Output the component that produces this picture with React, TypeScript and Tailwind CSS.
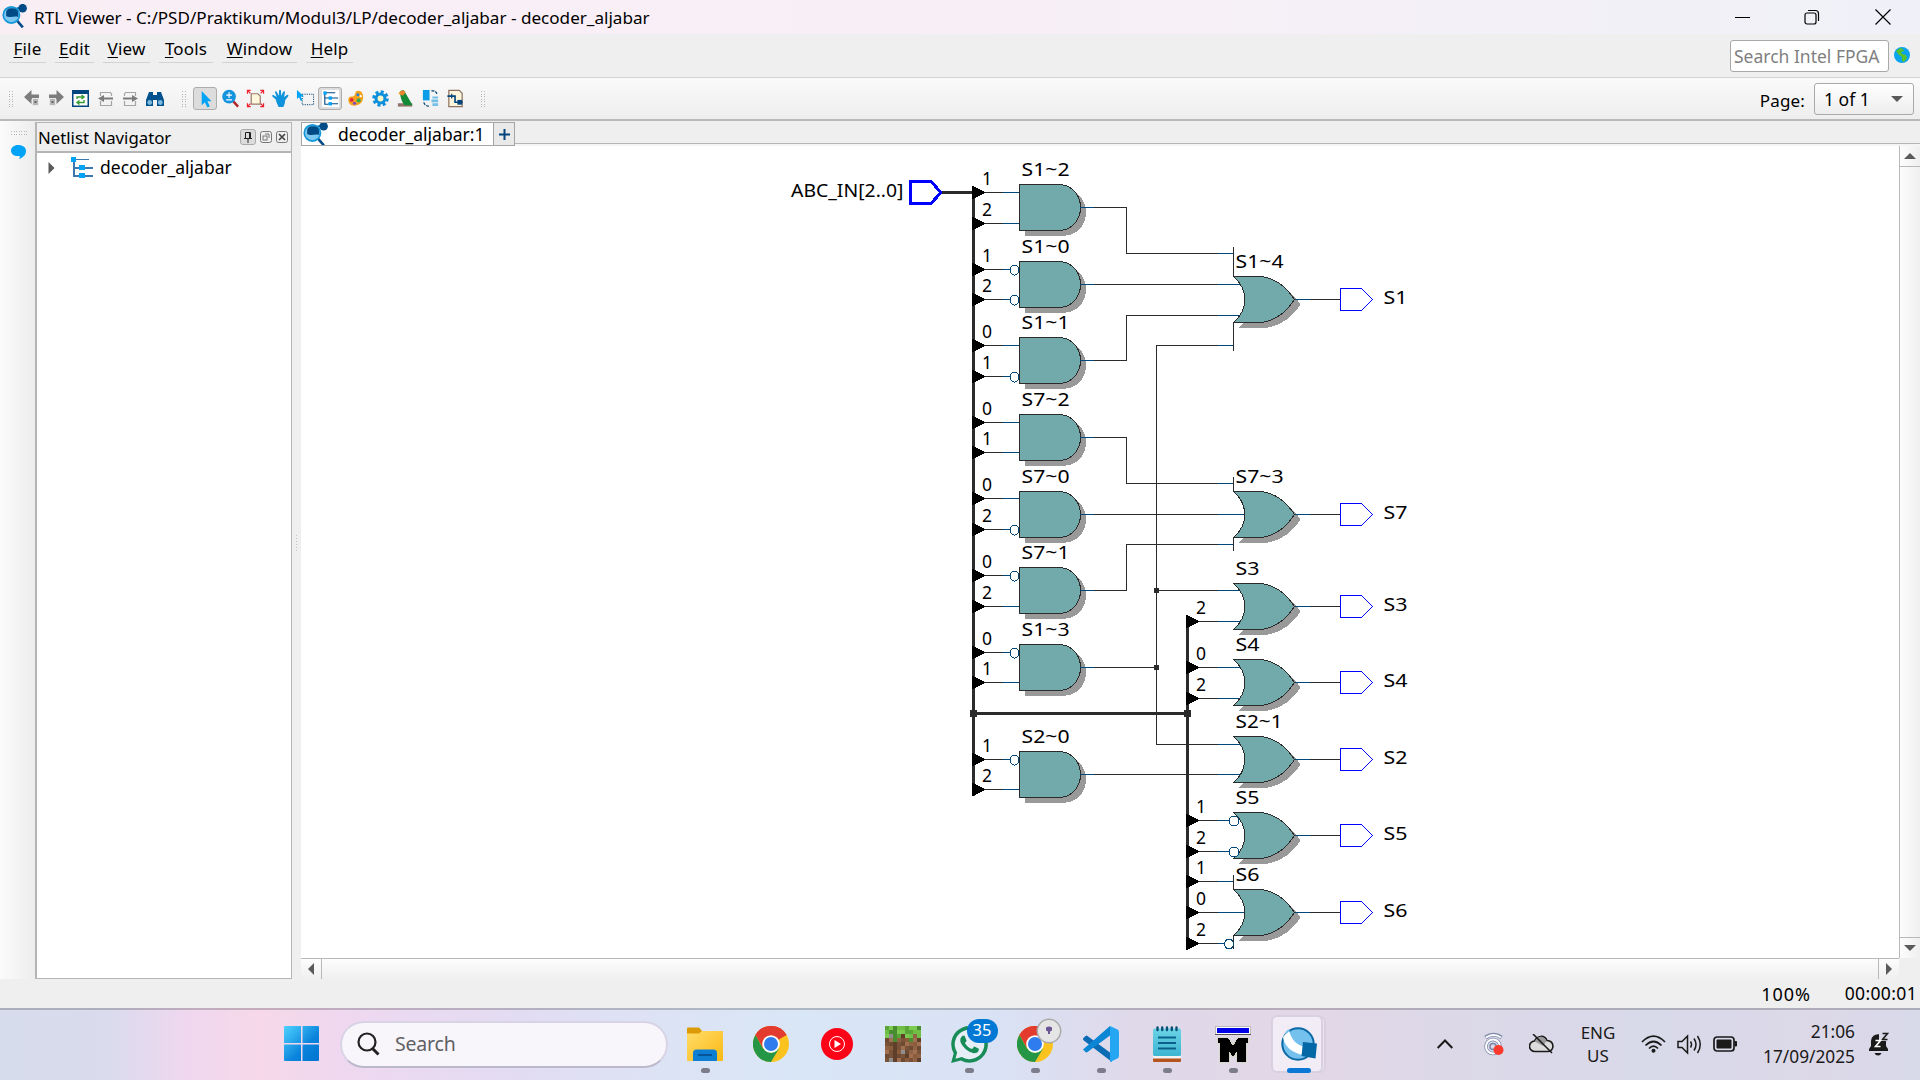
import React from "react";

const NAVY = "#004a86";
const SKY = "#00a3f5";

function ViewerLogo({ size }: { size: number }) {
  return (
    <svg width={size} height={size} viewBox="0 0 24 24" className="shrink-0">
      <path d="M14 4.500 18 3" stroke="#0077b8" strokeWidth="2" />
      <circle cx="19.800" cy="4" r="4.100" fill={NAVY} />
      <path d="M14 15.500 20 22.500" stroke={NAVY} strokeWidth="2.400" />
      <circle cx="9" cy="10.500" r="7.800" fill="#7cc8f0" stroke="#1296d8" strokeWidth="1.600" />
      <path d="M4 11.500V8a4 4 0 0 1 4-4h3a5 5 0 0 1 4.500 5v3.500C12 11 8 14 4 11.500Z" fill={NAVY} />
    </svg>
  );
}

function HierarchyIcon({ size }: { size: number }) {
  return (
    <svg width={size} height={size} viewBox="0 0 22 22" shapeRendering="crispEdges">
      <path d="M3 5v14h6M3 11h19M3 2.500h15M9 19h13" stroke="#3b78ad" strokeWidth="1.200" fill="none" />
      <rect x="0" y="0" width="5" height="5" fill={SKY} />
      <rect x="8" y="8" width="6" height="5" fill={SKY} />
      <rect x="8" y="16" width="6" height="5" fill={SKY} />
    </svg>
  );
}

function Grip() {
  return (
    <svg width="5" height="16" viewBox="0 0 5 16" shapeRendering="crispEdges">
      <path d="M.5 0v16M3.500 0v16" stroke="#b5b5b5" strokeDasharray="1 1.500" />
    </svg>
  );
}

function ArrowIcon({ flip }: { flip?: boolean }) {
  return (
    <svg width="16" height="17" viewBox="0 0 16 17" className={flip ? "-scale-x-100" : ""}>
      <path d="M0 7 7.500 0v4.500H15V9H7.500v5Z" fill="#7d7d7d" />
      <rect x="8.500" y="8.500" width="6" height="7" fill="#b5b5b5" stroke="#e8e8e8" />
      <rect x="10.500" y="11" width="2" height="2" fill="#666" />
    </svg>
  );
}

function PageArrow({ flip }: { flip?: boolean }) {
  return (
    <svg width="16" height="16" viewBox="0 0 16 16" fill="none" className={flip ? "-scale-x-100" : ""}>
      <path d="M2.500 5V1.500h10l1 1.500V5M2.500 10v4.500h11V10" stroke="#a5a5a5" strokeWidth="1.200" />
      <path d="M5 7.500h10" stroke="#7b7b7b" strokeWidth="2" />
      <path d="M0 7.500 6 4v7Z" fill="#7b7b7b" />
    </svg>
  );
}

const toolIcons: React.ReactNode[] = [
  <path d="M6 2v15l3.300-3 2.700 5.500 2.500-1.300L12 12.800h4.300Z" fill={SKY} />,
  <g>
    <path d="M12 12 18 18.500" stroke="#b3262a" strokeWidth="2.600" />
    <circle cx="8.500" cy="8" r="7.200" fill="#1593dd" />
    <path d="M5.500 6.500h6M8.500 3.500v6M5.500 11.500h6" stroke="#fff" strokeWidth="1.200" />
  </g>,
  <g>
    <path d="M5.500 5h7l2.500 2.500V16H5.500Z" fill="#fff8dc" stroke="#9a7b6b" strokeWidth="1.300" />
    <path d="M1.500 5V1.500H5M1.500 1.500l3 3M15 1.500h3.500V5M18.500 1.500l-3 3M1.500 15v3.500H5M1.500 18.500l3-3M15 18.500h3.500V15M18.500 18.500l-3-3" stroke="#f0202c" fill="none" strokeWidth="1.200" />
  </g>,
  <path d="M5 11 1.500 8c-1-1 .3-2.200 1.400-1.400L6 8.500 4.300 3.600c-.3-1.300 1.300-1.800 1.800-.5L8.200 7 8.500 1.800c.1-1.400 1.900-1.400 2 0l.3 5.200L12.900 3c.6-1.200 2.200-.5 1.800.8L13.800 8.500l3-2.200c1.200-.7 2.200.5 1.200 1.500L15 11.500l-.6 4L13 19H8l-2-4.500Z" fill="#0f93dc" />,
  <g>
    <rect x="6.500" y="5.500" width="12" height="11" fill="none" stroke="#003f70" strokeDasharray="1.200 1.200" />
    <path d="M1 1v9.500l2.200-1.800L5 12.500l1.700-.8L5 8h3.500Z" fill={SKY} />
  </g>,
  <g>
    <rect x="1" y="1" width="18" height="18" fill="#fff" />
    <path d="M4 4v12h4M4 9.500h14M4 4h11M8 15.500h10" stroke={NAVY} fill="none" strokeWidth="1.200" />
    <rect x="2.500" y="2.500" width="3.500" height="3.500" fill={SKY} />
    <rect x="8" y="7.800" width="3.500" height="3.500" fill={SKY} />
    <rect x="8" y="13.800" width="3.500" height="3.500" fill={SKY} />
  </g>,
  <g>
    <path d="M10 3c5-3 8.500 1 8 6.500-.5 5-4 8-9.500 8C4 17.500 2 14 2.500 10.500 3 8 5 8 7 8s3-3 3-5Z" fill="#f6a21d" />
    <circle cx="6" cy="11.500" r="2" fill="#e22740" /><circle cx="9" cy="15" r="1.700" fill="#7a48c5" />
    <circle cx="13.300" cy="12" r="2.200" fill="#35a852" /><circle cx="12.500" cy="6" r="1.600" fill="#1f83dd" />
    <circle cx="15.500" cy="7.500" r="1.200" fill="#fff" />
  </g>,
  <g>
    <circle cx="10" cy="10" r="7.200" fill="none" stroke="#108fdb" strokeWidth="3" strokeDasharray="3.200 2.450" />
    <circle cx="10" cy="10" r="4.700" fill="#fff6c8" stroke="#108fdb" strokeWidth="3.200" />
  </g>,
  <g>
    <path d="M2 15h15v3.500H2Z" fill="#8d7468" />
    <path d="M4 4C4 1 9 0 9.500 3.500L17.500 17H9C5 12 5 8 4 4Z" fill="#138a36" />
    <path d="M3 5c0-4 6-5 7-1L7 7Z" fill="#e8842b" /><path d="m2.500 4.500 3 .5-2.500 1Z" fill="#f5c84c" />
  </g>,
  <g>
    <rect x="2" y="1" width="7" height="11" fill="#0b9ee8" />
    <path d="M12 8h6v2h-6Zm-1 3h7v3h-7Zm1 4h6v3h-6Z" fill="#73bfe8" />
    <path d="M11 2c3-.5 5 .5 6 4M3 14c.5 2.500 3 4.500 6 4" fill="none" stroke="#003f70" strokeWidth="1.300" strokeDasharray="3 1.200" />
  </g>,
  <g>
    <path d="M3 1.500h11l3 3v14H3Z" fill="#fff6dc" stroke="#8c7160" strokeWidth="1.300" />
    <path d="M1.500 7.500h8v6.500h8" stroke="#00457d" strokeWidth="1.700" fill="none" />
    <rect x="12" y="11.500" width="5" height="5" fill="#00457d" />
    <path d="M6 5v5" stroke="#00457d" strokeWidth="1.300" />
  </g>,
];

function ToolButton({ index }: { index: number }) {
  const active = index === 0 || index === 5;
  return (
    <div className={`flex h-[23px] w-6 items-center justify-center ${active ? "rounded-[3px] border border-[#adadad] bg-[#dcdcdc]" : ""}`}>
      <svg width="19" height="19" viewBox="0 0 20 20" className="shrink-0">{toolIcons[index]}</svg>
    </div>
  );
}

/* ---------- schematic ---------- */

type AndGate = { name: string; y: number; pins: [string, boolean, number][] };
const andGates: AndGate[] = [
  { name: "S1~2", y: 184.5, pins: [["1", false, 192.5], ["2", false, 223.5]] },
  { name: "S1~0", y: 261.5, pins: [["1", true, 269.5], ["2", true, 299.5]] },
  { name: "S1~1", y: 337.5, pins: [["0", false, 345.5], ["1", true, 376.5]] },
  { name: "S7~2", y: 414.5, pins: [["0", false, 422.5], ["1", false, 452.5]] },
  { name: "S7~0", y: 491.5, pins: [["0", false, 498.5], ["2", true, 529.5]] },
  { name: "S7~1", y: 567.5, pins: [["0", true, 575.5], ["2", false, 606.5]] },
  { name: "S1~3", y: 644.5, pins: [["0", true, 652.5], ["1", false, 682.5]] },
  { name: "S2~0", y: 751.5, pins: [["1", true, 759.5], ["2", false, 789.5]] },
];

type OrGate = { name: string; out: string; y: number; w: number };
const orGates: OrGate[] = [
  { name: "S1~4", out: "S1", y: 276.5, w: 47 },
  { name: "S7~3", out: "S7", y: 491.5, w: 47 },
  { name: "S3", out: "S3", y: 583.5, w: 23 },
  { name: "S4", out: "S4", y: 659.5, w: 23 },
  { name: "S2~1", out: "S2", y: 736.5, w: 46 },
  { name: "S5", out: "S5", y: 812.5, w: 23 },
  { name: "S6", out: "S6", y: 889.5, w: 23 },
];

/* [x where the black wire starts, x where it ends at the gate, y] */
const orInputs: [number, number, number][] = [
  [1126, 1233, 253.5], [1094, 1240, 284.5], [1126, 1240, 315.5], [1156, 1233, 345.5],
  [1126, 1233, 483.5], [1094, 1244, 514.5], [1126, 1233, 544.5],
  [1156, 1240, 590.5], [1187, 1240, 621.5], [1187, 1240, 667.5], [1187, 1240, 698.5],
  [1156, 1240, 744.5], [1094, 1240, 774.5], [1187, 1229, 820.5], [1187, 1229, 851.5],
  [1187, 1233, 881.5], [1187, 1244, 912.5], [1187, 1225, 943.5],
];

const rightTaps: [string, number][] = [
  ["2", 621.5], ["0", 667.5], ["2", 698.5], ["1", 820.5], ["2", 851.5], ["1", 881.5], ["0", 912.5], ["2", 943.5],
];

const INK = "#2b2b2b";
const PIN = "#00487a";

function Tap({ x, y, label }: { x: number; y: number; label: string }) {
  return (
    <g>
      <path d={`M${x} ${y - 7}L${x + 13.500} ${y}L${x} ${y + 7}Z`} fill="#000" />
      <text x={x + 15} y={y - 7.500} fontSize="17.500" textAnchor="middle" fill="#000">{label}</text>
    </g>
  );
}

function Label({ x, y, w, children }: { x: number; y: number; w: number; children: string }) {
  return (
    <text x={x} y={y} fontSize="18.500" textLength={w} lengthAdjust="spacingAndGlyphs" fill="#000">{children}</text>
  );
}

const andPath = (x: number, y: number) =>
  `M${x} ${y}h41c12 1 20 11 20 23s-8 22-20 23h-41Z`;
const orPath = (x: number, y: number) =>
  `M${x} ${y}h28c15 2 26 12 33 23c-7 11-18 21-33 23h-28c15-13 15-33 0-46Z`;

function Schematic() {
  return (
    <svg
      width="1598" height="812" viewBox="301 146 1598 812" fill="none"
      shapeRendering="crispEdges" className="block font-['Noto_Sans',sans-serif]"
    >
      <Label x={791} y={196.500} w={112.500}>ABC_IN[2..0]</Label>
      <path d="M910.500 181.500h20.500l10 11-10 11h-20.500Z" stroke="#00f" strokeWidth="3" fill="#fff" />
      <path d="M942 192.500h31M973.500 187v609M1187.500 616v333M973.500 713.500h214" stroke={INK} strokeWidth="3" />

      <path
        d="M1094 207.500h32.500v46M1126.500 315.500v45H1094M1094 437.500h32.500v46M1126.500 544.500v46H1094M1156.500 345.500v399M1094 667.500h62.500"
        stroke={INK}
      />
      <path d="M1233.500 247v30M1233.500 322v29M1233.500 477v15M1233.500 538v13M1233.500 875v15M1233.500 935v14" stroke={INK} />
      {orInputs.map(([x1, x2, y]) => (
        <g key={`${x1}-${y}`}>
          <path d={`M${x1} ${y}H1218`} stroke={INK} />
          <path d={`M1218 ${y}H${x2}`} stroke={PIN} />
        </g>
      ))}

      {andGates.map((g) => (
        <g key={g.name}>
          <path d={andPath(1025, g.y + 5)} fill="#999" />
          <path d={andPath(1019.500, g.y)} fill="#72aaab" stroke={INK} />
          <path d={`M1080 ${g.y + 23}h14`} stroke={PIN} />
          <Label x={1021.500} y={g.y - 9} w={48}>{g.name}</Label>
          {g.pins.map(([label, inverted, y]) => (
            <g key={y}>
              <path d={`M975 ${y}h28`} stroke={INK} />
              <path d={`M1003 ${y}h${inverted ? 7 : 16}`} stroke={PIN} />
              {inverted && <ellipse cx="1014.500" cy={y + 0.5} rx="4.500" ry="5" stroke={PIN} fill="#fff" />}
              <Tap x={972} y={y} label={label} />
            </g>
          ))}
        </g>
      ))}

      {orGates.map((g) => (
        <g key={g.name}>
          <path d={orPath(1239.500, g.y + 5)} fill="#999" />
          <path d={orPath(1233.500, g.y)} fill="#72aaab" stroke={INK} />
          <path d={`M1295 ${g.y + 23}h15`} stroke={PIN} />
          <path d={`M1310 ${g.y + 23}h30`} stroke={INK} />
          <path d={`M1340.500 ${g.y + 12}h21l11 11-11 11h-21Z`} stroke="#00f" fill="#fff" />
          <Label x={1235.500} y={g.y - 9} w={g.w + 1}>{g.name}</Label>
          <Label x={1383.500} y={g.y + 27} w={24}>{g.out}</Label>
        </g>
      ))}

      {rightTaps.map(([label, y]) => <Tap key={y} x={1186} y={y} label={label} />)}
      <ellipse cx="1234" cy="821" rx="5" ry="5" stroke={PIN} fill="#fff" />
      <ellipse cx="1234" cy="852" rx="5" ry="5" stroke={PIN} fill="#fff" />
      <ellipse cx="1229" cy="944" rx="4.500" ry="5" stroke={PIN} fill="#fff" />

      <g fill={INK}>
        <rect x="1154" y="588" width="5" height="5" />
        <rect x="1154" y="665" width="5" height="5" />
        <rect x="970" y="710" width="7" height="7" />
        <rect x="1184" y="710" width="7" height="7" />
      </g>
    </svg>
  );
}

/* ---------- taskbar icons ---------- */

function ChromeIcon() {
  return (
    <svg width="36" height="36" viewBox="0 0 36 36">
      <circle cx="18" cy="18" r="18" fill="#fcc31e" />
      <path d="M18 18 2.400 9A18 18 0 0 1 33.600 9Z" fill="#e33b2e" />
      <path d="M18 9h15.600A18 18 0 0 0 2.400 9L10 22Z" fill="#e33b2e" />
      <path d="M2.400 9A18 18 0 0 0 18 36l8-13.500-8 4.500-8-4.500Z" fill="#249645" />
      <circle cx="18" cy="18" r="8.800" fill="#fff" />
      <circle cx="18" cy="18" r="7" fill="#2f7cee" />
    </svg>
  );
}

const dirt = ["#7a5237", "#8f6343", "#5f3f2a", "#a07050", "#6d4a32", "#8a5c3c"];
const grass = ["#5aa43a", "#6fbf45", "#4a8c30", "#7bcb50"];

function GrassBlock() {
  const depth = [3, 2, 4, 3, 2, 3, 4, 2, 3];
  const cells: React.ReactNode[] = [];
  for (let y = 0; y < 9; y++)
    for (let x = 0; x < 9; x++) {
      const n = (x * 7 + y * 13 + x * y * 5) % 23;
      const stone = (x === 1 && y === 2) || (x === 4 && y === 6) || (x === 1 && y === 8);
      const fill = stone ? "#8f8f8f" : y < depth[x] ? grass[n % 4] : dirt[n % 6];
      cells.push(<rect key={`${x}-${y}`} x={x * 4} y={y * 4} width="4" height="4" fill={fill} />);
    }
  return <svg width="36" height="36" viewBox="0 0 36 36" shapeRendering="crispEdges">{cells}</svg>;
}

const apps: { node: React.ReactNode; dot?: boolean; active?: boolean }[] = [
  {
    dot: true,
    node: (
      <svg width="36" height="34" viewBox="0 0 36 34">
        <defs><linearGradient id="fold" x2="1" y2="1"><stop stopColor="#ffdc6b" /><stop offset="1" stopColor="#fbb913" /></linearGradient></defs>
        <path d="M0 1.500Q0 .5 1 .5h11l3 3.500h20q1 0 1 1V12H0Z" fill="#dc9b06" />
        <path d="M0 6.500h12l3-2.500h20q1 0 1 1v28q0 1-1 1H1q-1 0-1-1Z" fill="url(#fold)" />
        <path d="M6 34V26q0-3.500 3.500-3.500h17q3.500 0 3.500 3.500v8Z" fill="#0d7ed2" />
        <path d="M11 28h14" stroke="#07539a" strokeWidth="2" />
      </svg>
    ),
  },
  { node: <ChromeIcon /> },
  {
    node: (
      <svg width="32" height="32" viewBox="0 0 32 32">
        <circle cx="16" cy="16" r="16" fill="#fb0418" />
        <circle cx="16" cy="16" r="7.500" fill="none" stroke="#fff" strokeWidth="1" />
        <path d="M13.500 12v8l6.500-4Z" fill="#fff" />
      </svg>
    ),
  },
  { node: <GrassBlock /> },
  {
    dot: true,
    node: (
      <div className="relative">
        <svg width="37" height="37" viewBox="0 0 24 24">
          <path d="M.057 24l1.687-6.163a11.870 11.870 0 0 1-1.587-5.946C.16 5.335 5.495 0 12.050 0a11.820 11.820 0 0 1 8.413 3.488 11.820 11.820 0 0 1 3.480 8.414c-.003 6.557-5.338 11.892-11.893 11.892a11.900 11.900 0 0 1-5.688-1.448L.057 24z" fill="#178c57" />
          <path d="M2.900 21.200 4 17.200a9.600 9.600 0 1 1 3 2.900Z" fill="#e6eff5" />
          <path d="M17.470 14.380c-.3-.15-1.760-.87-2.030-.97-.27-.1-.47-.15-.67.150-.2.300-.77.970-.94 1.160-.17.200-.35.220-.64.080-.3-.15-1.260-.46-2.390-1.480-.88-.79-1.480-1.760-1.650-2.060-.17-.3-.02-.46.130-.6.130-.14.300-.35.450-.52.150-.17.200-.3.300-.5.100-.2.050-.37-.03-.52-.08-.15-.67-1.610-.92-2.210-.24-.58-.49-.5-.67-.51h-.57c-.2 0-.52.070-.79.370-.27.300-1.040 1.020-1.040 2.480s1.070 2.880 1.210 3.070c.15.200 2.100 3.200 5.080 4.490 2.480.98 2.980.8 3.520.75.540-.05 1.760-.72 2-1.410.25-.7.250-1.290.17-1.410-.07-.13-.27-.2-.57-.35z" fill="#178c57" />
        </svg>
        <div className="absolute -top-[7px] left-[16px] flex h-6 w-[31px] items-center justify-center rounded-full bg-[#0078d4] text-[16.500px] leading-none text-white">35</div>
      </div>
    ),
  },
  {
    dot: true,
    node: (
      <div className="relative">
        <ChromeIcon />
        <svg width="26" height="26" viewBox="0 0 26 26" className="absolute -top-[8px] left-[19px]">
          <circle cx="13" cy="13" r="11.700" fill="#e5e5e5" stroke="#aaa" strokeWidth="1.500" />
          <path d="M10 9.500q3-1.800 6 0v3L14 13.500v2.500h-2v-2.500l-2-1Z" fill="#6a5692" />
        </svg>
      </div>
    ),
  },
  {
    dot: true,
    node: (
      <svg width="36" height="36" viewBox="0 0 36 36">
        <path d="M0 12.500 2.500 10q1-.8 2 0L29 28v8L.8 14.500Q-.3 13.500 0 12.500Z" fill="#0b6cb5" />
        <path d="M0 23.500 27 0v9.500L4.500 26q-1 .8-2 0Z" fill="#0a86d4" />
        <path d="M27 0 34.500 3.500Q36 4.200 36 6v24q0 1.800-1.500 2.500L27 36Z" fill="#25a6f2" />
      </svg>
    ),
  },
  {
    dot: true,
    node: (
      <svg width="28" height="36" viewBox="0 0 28 36">
        <defs><linearGradient id="note" x2="0" y2="1"><stop stopColor="#6cd3e6" /><stop offset="1" stopColor="#3db5d2" /></linearGradient></defs>
        <rect y="30" width="28" height="6" rx="1" fill="#b5541c" /><rect y="29" width="28" height="3.500" fill="#f2f2f2" />
        <rect y="2.500" width="28" height="27.500" rx="1.500" fill="url(#note)" />
        <path d="M4.500 1.500v2.500M9.200 1.500v2.500M14 1.500v2.500M18.800 1.500v2.500M23.500 1.500v2.500" stroke="#0b4f74" strokeWidth="2.400" strokeLinecap="round" />
        <path d="M5 11.500h18M5 17h18M5 22.500h18" stroke="#0a6089" strokeWidth="2" />
      </svg>
    ),
  },
  {
    dot: true,
    node: (
      <svg width="36" height="37" viewBox="0 0 36 37" shapeRendering="crispEdges">
        <rect x=".5" y=".5" width="35" height="8" fill="#fff" stroke="#bbb" /><path d="M0 8.500h36" stroke="#555" />
        <rect x="2" y="2" width="32" height="5" fill="#0000e8" />
        <path d="M2.500 11.500h11l4.500 7 4.500-7h11v6h-2v19h-10v-9l-3.500 4-3.500-4v9H4.500v-19h-2Z" fill="#000" stroke="#d7d7cc" strokeWidth="1.500" />
      </svg>
    ),
  },
  {
    active: true,
    node: (
      <svg width="36" height="36" viewBox="0 0 36 36">
        <circle cx="17" cy="18" r="15.700" fill="#74c1ee" stroke="#0a69a5" strokeWidth="2" />
        <path d="M2 11 8 4c2 9 7 16 18 17l-4 8C11 27 3 20 2 11Z" fill="#fff" />
        <path d="m22 16 14 1.500-1.500 15L20.500 30Z" fill="#0568a6" />
        <path d="M8 4 5 7" stroke="#74c1ee" strokeWidth="2" />
      </svg>
    ),
  },
];

function Triangle({ d }: { d: string }) {
  return <svg width="12" height="12" viewBox="0 0 12 12"><path d={d} fill="#5a5a5a" /></svg>;
}

const menu: [string, string][] = [
  ["File", "w-[37px]"], ["Edit", "w-[39px]"], ["View", "w-[47px]"],
  ["Tools", "w-[54px]"], ["Window", "w-[75px]"], ["Help", "w-[47px]"],
];

export default function App() {
  return (
    <div className="flex h-[1080px] w-[1920px] flex-col overflow-hidden bg-[#efefef] font-['Noto_Sans',sans-serif] text-[17px] leading-none whitespace-nowrap text-black">
      <header className="flex h-[34px] shrink-0 items-center bg-linear-to-r from-[#faeef5] via-[#f8eff6] to-[#f0f1f8]">
        <div className="flex h-full w-[34px] items-start pt-[4px] pl-[2px]"><ViewerLogo size={25} /></div>
        <span className="pt-px text-[17.100px]">RTL Viewer - C:/PSD/Praktikum/Modul3/LP/decoder_aljabar - decoder_aljabar</span>
        <div className="ml-auto flex items-center">
          <svg width="15" height="16" className="mr-[54px]"><path d="M0 8.500h15" stroke="#000" /></svg>
          <svg width="16" height="16" viewBox="0 0 16 16" fill="none" stroke="#000" strokeWidth="1.200" className="mr-[55px]">
            <rect x="1" y="4" width="11" height="11" rx="2" /><path d="M4 1.500h7.500a3 3 0 0 1 3 3V12" />
          </svg>
          <svg width="16" height="16" viewBox="0 0 16 16" className="mr-[29px]"><path d="m.5.5 15 15M15.500.5l-15 15" stroke="#000" strokeWidth="1.200" /></svg>
        </div>
      </header>

      <div className="flex h-[44px] shrink-0 items-start border-b border-[#d2d2d2]">
        <nav className="ml-[9px] flex gap-[9px]">
          {menu.map(([m, w]) => (
            <div key={m} className={`flex h-[29px] items-center justify-center border-b border-[#d2d2d2] tracking-[0.010em] ${w}`}>
              <span><span className="underline decoration-1 underline-offset-2">{m[0]}</span>{m.slice(1)}</span>
            </div>
          ))}
        </nav>
        <div className="mt-[6px] ml-auto flex h-8 w-[159px] items-center rounded-[3px] border border-[#a9a9a9] bg-white pt-px pl-[3px] text-[17.500px] text-[#7f7f7f]">Search Intel FPGA</div>
        <svg width="16" height="16" viewBox="0 0 16 16" className="mt-[13px] mr-[10px] ml-[5px]">
          <circle cx="8" cy="8" r="8" fill="#0aa3ef" />
          <path d="M2 4 6 1l3 1 1 2-3 1 1 2 4 1 1 3-3 4-2-1V10L5 8Z" fill="#58c22c" />
        </svg>
      </div>

      <div className="flex h-[43px] shrink-0 items-center border-b-2 border-[#b9b9b9] bg-linear-to-b from-[#fafafa] to-[#eeeeee]">
        <div className="ml-[9px] flex items-center"><Grip /></div>
        <div className="ml-[10px] flex items-center gap-[8px]">
          <ArrowIcon /><ArrowIcon flip />
          <svg width="17" height="17" viewBox="0 0 17 17">
            <rect x=".75" y=".75" width="15.500" height="15.500" fill="#fff" stroke="#00457d" strokeWidth="1.500" /><path d="M0 0h17v4H0Z" fill="#00457d" />
            <path d="M5 9V7h6M12 10v2.500H6M9.500 5 12 7 9.500 9M7.500 10.500 5 12.500l2.500 2" stroke="#3a9d34" fill="none" strokeWidth="1.400" />
          </svg>
          <div className="ml-[1px]"><PageArrow /></div><div><PageArrow flip /></div>
          <svg width="18" height="16" viewBox="0 0 18 16">
            <path d="M3 1h4v3h4V1h4l3 8v6h-7V9H7v6H0V9Z" fill="#00528f" />
            <circle cx="3.700" cy="11.500" r="2.400" fill="#7fb9dc" /><circle cx="14.300" cy="11.500" r="2.400" fill="#7fb9dc" />
          </svg>
        </div>
        <div className="ml-[18px]"><Grip /></div>
        <div className="ml-[6px] flex gap-px">{toolIcons.map((_, i) => <ToolButton key={i} index={i} />)}</div>
        <div className="ml-[14px]"><Grip /></div>
        <span className="ml-auto pt-[4px] tracking-[0.010em]">Page:</span>
        <div className="mr-[6px] ml-[9px] flex h-8 w-[100px] items-center justify-between rounded-[3px] border border-[#a9a9a9] bg-linear-to-b from-white to-[#ededed] pr-[10px] pl-[9px]">
          <span className="pt-[3px] text-[17.500px]">1 of 1</span><Triangle d="M0 3h12L6 9Z" />
        </div>
      </div>

      <main className="flex h-[858px] shrink-0">
        <aside className="flex w-[35px] flex-col items-center bg-linear-to-r from-[#fbfbfb] to-[#ededed] pt-[10px]">
          <svg width="16" height="5" shapeRendering="crispEdges" className="ml-[3px]"><path d="M0 .5h16M0 3.500h16" stroke="#b5b5b5" strokeDasharray="1 1.500" /></svg>
          <svg width="15" height="14" viewBox="0 0 15 14" className="mt-[9px] ml-[1px]"><path d="M7 0c5 0 8 2.500 8 6 0 4-3 6.500-7 8 1-1.500 1-2 .5-3C3 11.500 0 9 0 5.500 0 2.500 3 0 7 0Z" fill={SKY} /></svg>
        </aside>
        <section className="mt-px flex w-[257px] flex-col border border-l-2 border-[#b5b5b5] bg-white">
          <div className="flex h-[30px] shrink-0 items-center border-b-2 border-[#b5b5b5] bg-[#efefef] pl-[1px]">
            <span className="pt-[3px] text-[16.800px]">Netlist Navigator</span>
            <div className="mr-[3px] ml-auto flex items-center gap-[4px]">
              <div className="flex h-[16px] w-[16px] items-center justify-center rounded-[3px] border border-[#aaa] bg-[#dcdcdc]">
                <svg width="8" height="12" viewBox="0 0 8 12" fill="none" stroke="#222"><path d="M1.500 7V1.500h5V7M0 7.500h8M4 8v4M5.500 2v5" /></svg>
              </div>
              <svg width="12" height="12" viewBox="0 0 12 12" fill="none" stroke="#777"><rect x=".5" y=".5" width="11" height="11" rx="2" /><rect x="3" y="5" width="4" height="4" /><path d="M5 3h4v4" /></svg>
              <svg width="12" height="12" viewBox="0 0 12 12" fill="none" stroke="#777"><rect x=".5" y=".5" width="11" height="11" rx="2" /><path d="m3 3 6 6M9 3 3 9" stroke="#444" strokeWidth="1.700" /></svg>
            </div>
          </div>
          <div className="flex h-[30px] items-center pl-[9px]">
            <Triangle d="M2.500 0v12L8.500 6Z" />
            <div className="ml-[13px]"><HierarchyIcon size={22} /></div>
            <span className="ml-[7px] text-[17.500px]">decoder_aljabar</span>
          </div>
        </section>
        <div className="flex w-[9px] items-center justify-center">
          <svg width="3" height="16" shapeRendering="crispEdges" className="-mt-[14px]"><path d="M1.500 0v16" stroke="#c5c5c5" strokeDasharray="1 2" /></svg>
        </div>
        <section className="flex flex-1 flex-col">
          <div className="flex h-[25px] shrink-0 items-start border-b-2 border-[#f4f4f4]">
            <div className="mt-px flex h-[24px] w-[193px] items-center overflow-hidden border border-[#a5a5a5] bg-white pl-[1px]">
              <ViewerLogo size={25} />
              <span className="ml-[10px] pt-[2px] text-[17.500px]">decoder_aljabar:1</span>
            </div>
            <div className="mt-px flex h-[24px] w-[21px] items-center justify-center border border-l-0 border-[#a5a5a5] bg-[#e9e9e9]">
              <svg width="11" height="11"><path d="M0 5.500h11M5.500 0v11" stroke="#00457d" strokeWidth="2" /></svg>
            </div>
            <div className="h-[23px] flex-1 border-b border-[#b5b5b5]" />
          </div>
          <div className="flex h-[812px] shrink-0">
            <div className="w-[1598px] bg-white"><Schematic /></div>
            <div className="flex flex-1 flex-col justify-between border-l border-[#b9b9b9] bg-linear-to-r from-[#fdfdfd] to-[#efefef]">
              <div className="flex h-[21px] items-center justify-center border-b border-[#b9b9b9]"><Triangle d="M0 9h12L6 3Z" /></div>
              <div className="flex h-[21px] items-center justify-center border-t border-[#b9b9b9]"><Triangle d="M0 3h12L6 9Z" /></div>
            </div>
          </div>
          <div className="flex h-[21px]">
            <div className="flex w-[1598px] justify-between border-t border-[#b9b9b9] bg-linear-to-b from-[#fdfdfd] to-[#efefef]">
              <div className="flex w-[21px] items-center justify-center border-r border-[#b9b9b9]"><Triangle d="M9 0v12L3 6Z" /></div>
              <div className="flex w-[21px] items-center justify-center border-l border-[#b9b9b9]"><Triangle d="M3 0v12L9 6Z" /></div>
            </div>
          </div>
        </section>
      </main>

      <footer className="flex h-[29px] shrink-0 items-center justify-end gap-[34px] pr-[3px] pt-px text-[17.500px]">
        <span className="text-[18px] tracking-[0.050em]">100%</span><span className="tracking-[0.020em]">00:00:01</span>
      </footer>

      <div className="flex h-[72px] shrink-0 items-center border-t-2 border-black/20 bg-[linear-gradient(90deg,#d6dcec_0px,#dadbed_110px,#f0d7ef_190px,#f6d8e9_260px,#eed8f0_350px,#e2dcf2_520px,#dce3f4_660px,#d9e6f6_800px,#d9e2f4_1000px,#dfd9ea_1130px,#e2d7e6_1300px,#dcd8e8_1450px,#d8d9e9_1650px,#dcd8e8_1820px,#d8d9e9_1920px)] bg-[#dadbed] bg-clip-border pb-[2px]">
        <svg width="36" height="36" viewBox="0 0 36 36" className="ml-[284px]">
          <defs><linearGradient id="win" x2="1" y2="1"><stop stopColor="#4fd2ff" /><stop offset=".6" stopColor="#0a84dc" /><stop offset="1" stopColor="#0073d0" /></linearGradient></defs>
          <path d="M0 1q0-1 1-1h16v17H0ZM18.500 0H34q1 0 1 1v16H18.500ZM0 18.500h17V35H1q-1 0-1-1ZM18.500 18.500H35V34q0 1-1 1H18.500Z" fill="url(#win)" />
        </svg>
        <div className="ml-[20px] flex h-[47px] w-[328px] items-center rounded-full border-2 border-b-[#bdb9cc] border-[#d9d3e6] bg-[#f8f5fb] pl-[15px]">
          <svg width="23" height="24" viewBox="0 0 23 24" fill="none" stroke="#222"><circle cx="10" cy="10" r="8.500" strokeWidth="2.200" /><path d="m15.500 16.500 6 6" strokeWidth="3" /></svg>
          <span className="ml-[15px] text-[19.500px] tracking-[-0.010em] text-[#5f5f64]">Search</span>
        </div>
        <div className="ml-[4px] flex h-full">
          {apps.map((a, i) => (
            <div key={i} className="relative flex h-full w-[66px] items-center justify-center">
              {a.active && (
                <>
                  <div className="absolute top-[6px] left-[12px] h-[57px] w-[48px] rounded-[6px] border-2 border-[#d8d0e0] bg-[#eae3ef]" />
                  <div className="absolute top-[5px] left-[5px] h-[58px] w-[52px] rounded-[6px] border-2 border-[#d8d0e0] bg-[#f1ecf6]" />
                </>
              )}
              <div className="relative">{a.node}</div>
              {a.dot && <div className="absolute bottom-[5px] left-[29px] h-[5px] w-[9px] rounded-full bg-[#7d7c8a]" />}
              {a.active && <div className="absolute bottom-[5px] left-[21px] h-[5px] w-[24px] rounded-full bg-[#0a78d4]" />}
            </div>
          ))}
        </div>
        <div className="ml-auto flex h-full items-center text-[#1a1a1a]">
          <svg width="16" height="10" fill="none" stroke="#1a1a1a" strokeWidth="2" className="mr-[31px]"><path d="m.7 9 7.300-7.500L15.300 9" /></svg>
          <svg width="20" height="24" viewBox="0 0 20 24" fill="none" className="mr-[25px]">
            <path d="M1.500 5.500q8-5.500 16 0" stroke="#7b88a8" strokeWidth="4" /><path d="M2 5.500q7.500-5 15 0" stroke="#fff" strokeWidth="2" />
            <circle cx="9" cy="14.500" r="7" stroke="#7b88a8" strokeWidth="3.500" /><circle cx="9" cy="14.500" r="7" stroke="#fff" strokeWidth="2" />
            <circle cx="9" cy="14.500" r="3" stroke="#7b88a8" strokeWidth="1.500" /><circle cx="14.500" cy="18" r="5" fill="#fb3a2d" />
          </svg>
          <svg width="25" height="20" viewBox="0 0 25 20" className="mr-[26px]">
            <path d="M6 17.500A5.200 5.200 0 0 1 5.500 7C8 1.500 15.500.5 18 6.500c8 .5 7.500 11 1 11Z" fill="#dcdcdc" stroke="#1a1a1a" strokeWidth="1.600" />
            <path d="M6 7.500C8 1.500 15 1 17.500 7L14 12Z" fill="#9a9a9a" /><path d="m4 0 19 19" stroke="#1a1a1a" strokeWidth="1.600" />
          </svg>
          <div className="mr-[25px] flex w-[36px] flex-col items-center gap-[6px] text-[17px]"><span>ENG</span><span>US</span></div>
          <svg width="25" height="18" viewBox="0 0 25 18" fill="none" stroke="#1a1a1a" strokeWidth="1.700" className="mr-[11px]">
            <path d="M1 7Q12.500-4.500 24 7M4.500 10.500q8-8 16 0M8 13.500q4.500-4.500 9 0" /><circle cx="12.500" cy="15.700" r="2" fill="#1a1a1a" stroke="none" />
          </svg>
          <svg width="25" height="21" viewBox="0 0 25 21" fill="none" stroke="#1a1a1a" strokeWidth="1.500" className="mr-[11px]">
            <path d="M1 7.500h4L10.500 2v17L5 13.500H1ZM13.500 7.500q2 3 0 6M17 4.500q4 6 0 12M20.500 2q5.500 8.500 0 17" />
          </svg>
          <svg width="25" height="16" viewBox="0 0 25 16" className="mr-[24px]">
            <rect x="1" y="1" width="20" height="14" rx="3" fill="none" stroke="#1a1a1a" strokeWidth="1.700" /><rect x="3.500" y="3.500" width="15" height="9" rx="1" fill="#1a1a1a" /><path d="M22 5.500h1.500V10H22Z" fill="#1a1a1a" stroke="#1a1a1a" />
          </svg>
          <div className="mr-[13px] flex w-[93px] flex-col items-end gap-[7px] text-[17.300px]"><span>21:06</span><span>17/09/2025</span></div>
          <svg width="22" height="24" viewBox="0 0 22 24" className="mr-[30px]">
            <path d="M1 19v-2l2-3V9a7 7 0 0 1 8-6.700V9h7v5l2 3v2Z" fill="#1a1a1a" /><path d="M6.500 21h7q-1 2.500-3.500 2.500T6.500 21Z" fill="#1a1a1a" />
            <path d="M14.500 1.500h5l-5 6h5" fill="none" stroke="#1a1a1a" strokeWidth="1.600" />
            <path d="M7.500 8.500h5l-5 6h5" fill="none" stroke="#fff" strokeWidth="1.600" />
          </svg>
        </div>
      </div>
    </div>
  );
}
